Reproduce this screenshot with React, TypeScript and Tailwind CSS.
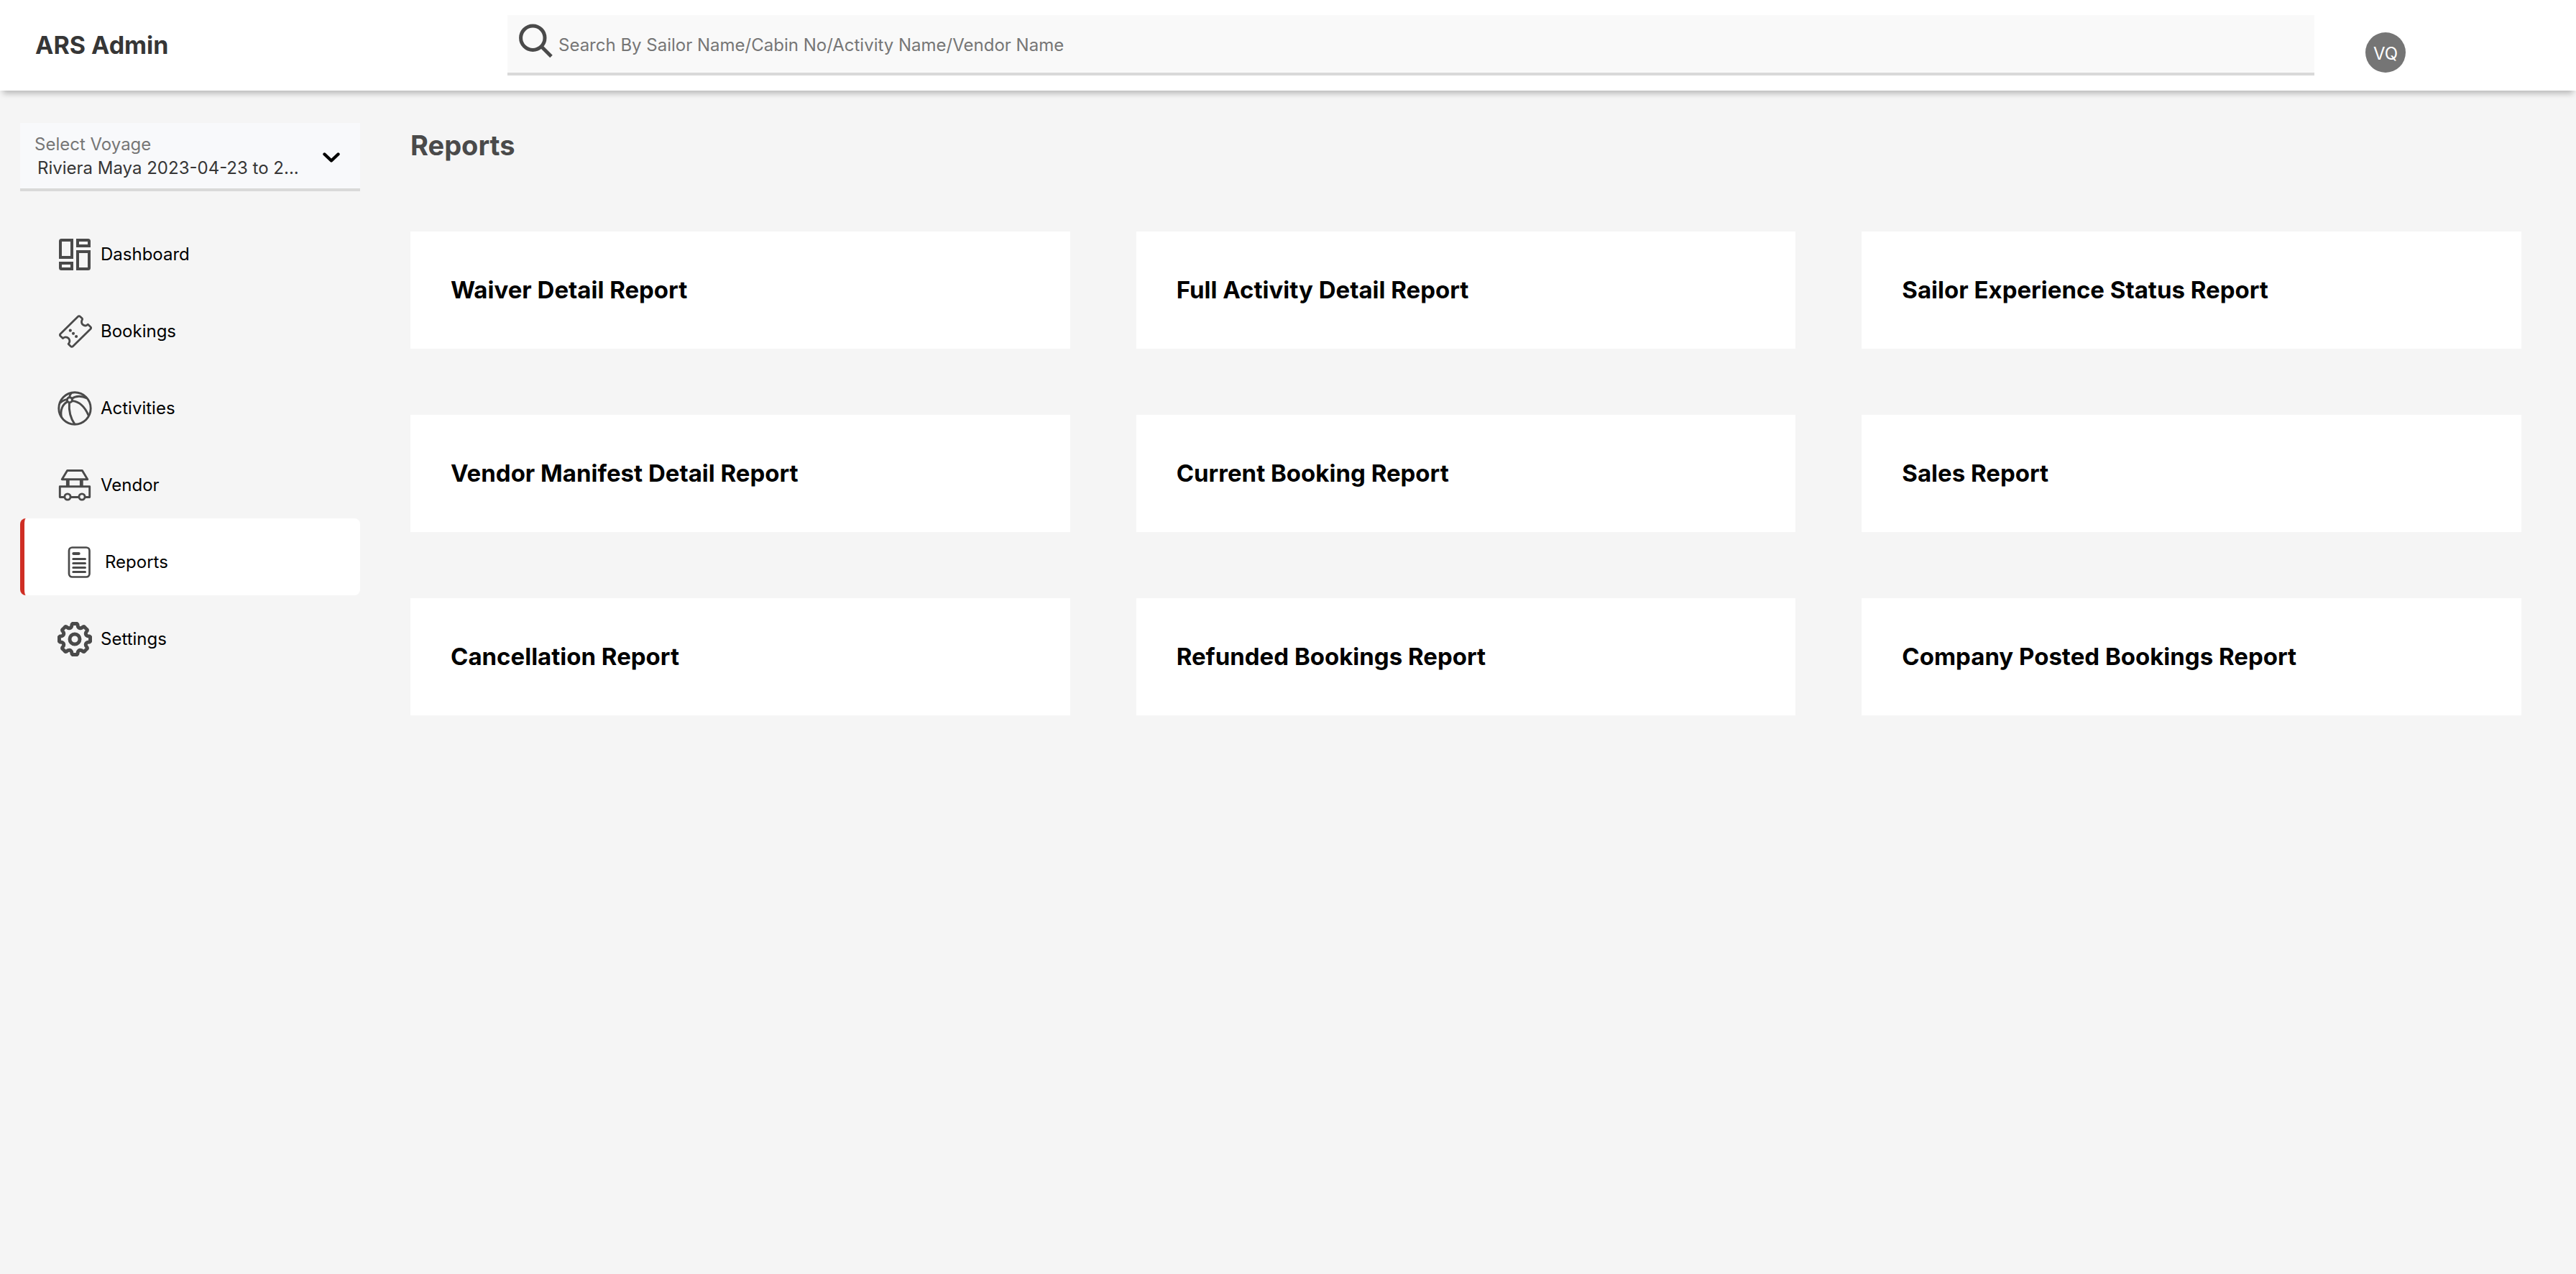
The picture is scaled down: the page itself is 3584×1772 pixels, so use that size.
import type { ReactNode } from 'react';

const polar = (r: number, deg: number) => {
  const a = (deg * Math.PI) / 180;
  return `${(24 + r * Math.cos(a)).toFixed(2)} ${(24 + r * Math.sin(a)).toFixed(2)}`;
};

const gearPath =
  Array.from({ length: 8 }, (_, k) => {
    const a = k * 45;
    return [
      `${k === 0 ? 'M' : 'L'}${polar(20.8, a - 11)}`,
      `Q${polar(22.4, a - 8)} ${polar(21.6, a - 5)}`,
      `L${polar(21.6, a + 5)}`,
      `Q${polar(22.4, a + 8)} ${polar(20.8, a + 11)}`,
      `L${polar(18.2, a + 14)}`,
      `Q${polar(15.6, a + 22.5)} ${polar(18.2, a + 31)}`,
    ].join(' ');
  }).join(' ') + ' Z';

function Icon({ width, children }: { width: number; children: ReactNode }) {
  return (
    <svg
      viewBox="0 0 48 48"
      className="size-12 shrink-0 text-[#4a4a4a]"
      fill="none"
      stroke="currentColor"
      strokeWidth={width}
      strokeLinejoin="round"
      aria-hidden="true"
    >
      {children}
    </svg>
  );
}

const DashboardIcon = () => (
  <Icon width={4}>
    <g strokeLinejoin="miter">
      <path d="M20 4V28H4V5.5Q4 4 5.5 4Z" />
      <path d="M28 4H42.5Q44 4 44 5.5V12H28Z" />
      <path d="M28 20H44V42.5Q44 44 42.5 44H28Z" />
      <path d="M4 36H20V44H5.5Q4 44 4 42.5Z" />
    </g>
  </Icon>
);

const TicketIcon = () => (
  <Icon width={2.8}>
    <path d="M28.3 3.4Q30 1.8 31.7 3.4L34.2 5.8Q35 6.8 34.2 8Q32.6 11 34.6 14Q37.6 17.2 41 15.2L42.4 14.2L45.8 17.4Q47.4 19 45.8 20.7L21.6 44.4Q19.9 46 18.2 44.4L15.2 41.4L16 40.2Q18 36.8 15.6 33.8Q12.4 30.6 8.8 32.6L7.4 33.6L4.2 30.6Q2.6 29 4.2 27.3Z" />
    <g fill="currentColor" stroke="none">
      <circle cx="17.8" cy="22.7" r="2.1" />
      <circle cx="22" cy="26.8" r="2.1" />
      <circle cx="26.1" cy="31" r="2.1" />
    </g>
  </Icon>
);

const BallIcon = () => (
  <Icon width={2.9}>
    <circle cx="24" cy="24" r="22.2" />
    <circle cx="16.9" cy="12.3" r="3.6" />
    <path d="M16.4 16C15.6 27 17.6 37 24 46.2" />
    <path d="M20.4 13.6C30 14.4 38 21.5 43.2 34" />
    <path d="M20 10.4C25.5 6.2 34 6.2 41 10" />
    <path d="M16.7 8.8C16.9 6.5 17.7 4.2 19.6 2.3" />
    <path d="M13.4 11.6C9.5 12 6.4 13.6 3.5 16.5" />
    <path d="M14 14.6C6.5 18.5 3.6 27 5.5 36.5" />
  </Icon>
);

const StallIcon = () => (
  <Icon width={2.9}>
    <path d="M13.6 3.5H34.4L41.8 15.7H6.2Z" />
    <path d="M14.3 16V25.5M33.3 16V25.5" strokeWidth={4.8} />
    <path d="M10 40.5H3.3V25.7H44.7V40.5H38M18.5 40.5H29.5" />
    <circle cx="14" cy="40" r="4.1" />
    <circle cx="34" cy="40" r="4.1" />
  </Icon>
);

const ReportIcon = () => (
  <Icon width={2.7}>
    <rect x="10" y="3.5" width="28.5" height="41" rx="4.5" />
    <g strokeLinecap="round">
      <path d="M16.3 12H23.7" strokeWidth={4} />
      <path d="M15.8 19.5H32.5M15.8 25.5H32.5M15.8 31.5H32.5M15.8 37.5H32.5" strokeWidth={3} />
    </g>
  </Icon>
);

const GearIcon = () => (
  <Icon width={4.9}>
    <path d={gearPath} />
    <circle cx="24" cy="24" r="7" />
  </Icon>
);

const navItems = [
  { label: 'Dashboard', icon: <DashboardIcon /> },
  { label: 'Bookings', icon: <TicketIcon /> },
  { label: 'Activities', icon: <BallIcon /> },
  { label: 'Vendor', icon: <StallIcon /> },
  { label: 'Reports', icon: <ReportIcon />, active: true },
  { label: 'Settings', icon: <GearIcon /> },
];

const reports = [
  'Waiver Detail Report',
  'Full Activity Detail Report',
  'Sailor Experience Status Report',
  'Vendor Manifest Detail Report',
  'Current Booking Report',
  'Sales Report',
  'Cancellation Report',
  'Refunded Bookings Report',
  'Company Posted Bookings Report',
];

function Header() {
  return (
    <header className="relative flex h-[126px] items-center bg-white shadow-[0_8px_8px_-4px_rgba(0,0,0,0.25)]">
      <div className="w-[706px] shrink-0 pl-[49px] text-[34px] leading-10 font-bold text-[#363636]">ARS Admin</div>
      <div className="flex h-[84px] min-w-0 flex-1 border-b-4 border-[#d9d9d9] bg-[#f9f9f9] pl-4">
        <span className="mt-3 shrink-0">
          <Icon width={5}>
            <circle cx="19.3" cy="19.7" r="16.7" />
            <path d="M31 31.5L45 45.5" />
          </Icon>
        </span>
        <input
          type="text"
          aria-label="Search"
          placeholder="Search By Sailor Name/Cabin No/Activity Name/Vendor Name"
          className="ml-[7px] min-w-0 flex-1 bg-transparent pt-1 text-2xl text-[#363636] outline-none placeholder:text-[#767676]"
        />
      </div>
      <button
        type="button"
        className="mt-5 mr-[237px] ml-[71px] flex size-14 shrink-0 items-center justify-center rounded-full bg-[#757575] pt-1 text-2xl text-white"
      >
        VQ
      </button>
    </header>
  );
}

function VoyageSelect() {
  return (
    <div className="flex h-[95px] items-start border-b-4 border-[#d9d9d9] bg-[#f8f9fb] pt-3.5 pr-7 pl-5">
      <div className="flex min-w-0 flex-1 flex-col">
        <label htmlFor="voyage" className="text-2xl leading-8 text-[#767676]">
          Select Voyage
        </label>
        <select
          id="voyage"
          className="h-[34px] w-full appearance-none bg-transparent pl-1 text-2xl text-[#363636] outline-none"
        >
          <option>Riviera Maya 2023-04-23 to 2...</option>
        </select>
      </div>
      <svg viewBox="0 0 24 16" className="mt-[26px] h-4 w-6 shrink-0" fill="none" stroke="black" strokeWidth={4.4} strokeLinecap="round" strokeLinejoin="round" aria-hidden="true">
        <path d="M2.5 3.5L12 12.5L21.5 3.5" />
      </svg>
    </div>
  );
}

export default function App() {
  return (
    <div className="min-h-screen bg-[#f5f5f5] font-['Inter',sans-serif]">
      <Header />
      <div className="flex">
        <aside className="w-[501px] shrink-0 pt-[45px] pl-7">
          <VoyageSelect />
          <nav className="mt-[27px] flex flex-col">
            {navItems.map((item) => (
              <a
                key={item.label}
                href="#"
                aria-current={item.active ? 'page' : undefined}
                className={
                  item.active
                    ? 'flex h-[107px] items-center gap-3 rounded-lg border-l-6 border-[#cf2e24] bg-white pt-3.5 pl-[52px] text-2xl text-black'
                    : 'flex h-[107px] items-center gap-3 pt-3.5 pl-[52px] text-2xl text-black'
                }
              >
                {item.icon}
                {item.label}
              </a>
            ))}
          </nav>
        </aside>
        <main className="min-w-0 flex-1 pt-14 pr-[76px] pl-[70px]">
          <h1 className="text-[38px] leading-10 font-bold text-[#4a4a4a]">Reports</h1>
          <div className="mt-[100px] grid grid-cols-3 gap-[92px]">
            {reports.map((name) => (
              <a key={name} href="#" className="flex h-[163px] items-center bg-white px-14 text-[33px] font-bold text-black">
                {name}
              </a>
            ))}
          </div>
        </main>
      </div>
    </div>
  );
}
